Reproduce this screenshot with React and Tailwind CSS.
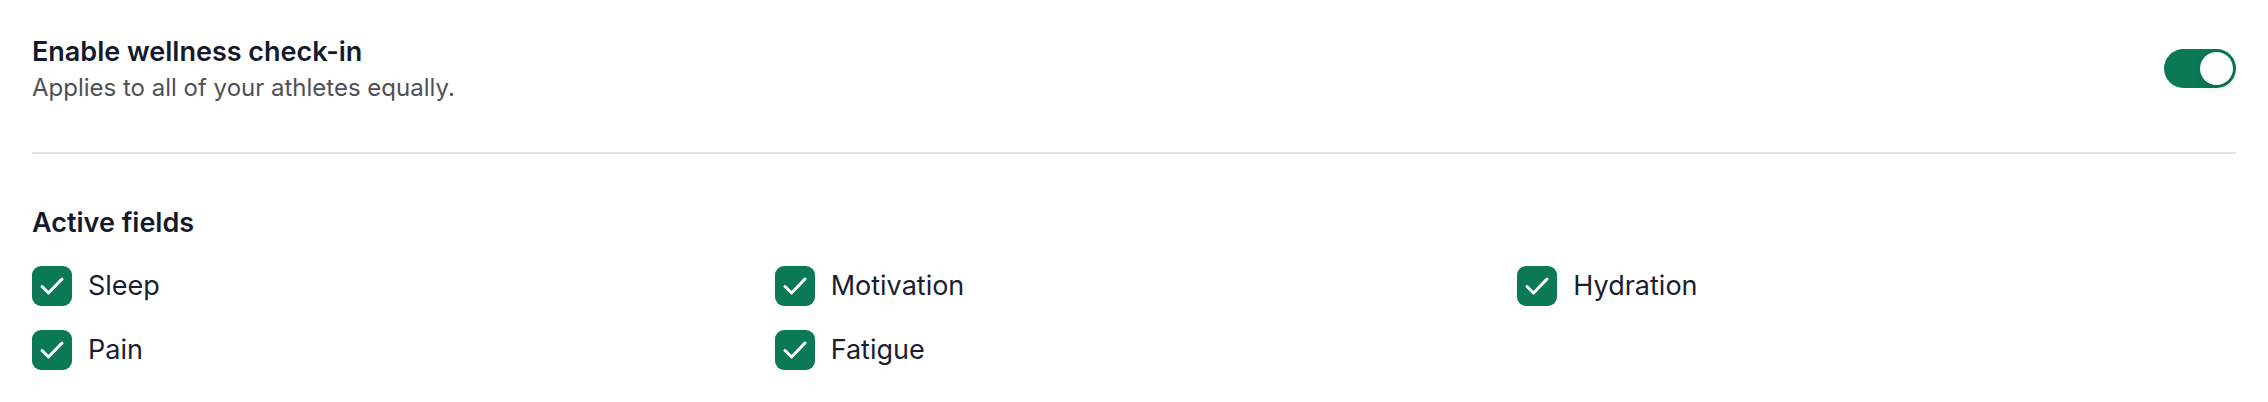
import React, { useState } from 'react'

const fields = ['Sleep', 'Motivation', 'Hydration', 'Pain', 'Fatigue']

function Check() {
  return (
    <svg viewBox="0 0 40 40" className="w-full h-full">
      <path d="M10 20.5 L16.5 27 L30 13" fill="none" stroke="white" strokeWidth="3" strokeLinecap="round" strokeLinejoin="round" />
    </svg>
  )
}

export default function App() {
  const [enabled, setEnabled] = useState(true)
  const [active, setActive] = useState(fields)

  const toggleField = (name) => {
    setActive(active.includes(name) ? active.filter((f) => f !== name) : [...active, name])
  }

  return (
    <div className="bg-white w-[2268px] h-[402px] px-8 pt-8 font-['Inter','Liberation_Sans',sans-serif]">
      <div className="flex items-center justify-between">
        <div className="flex flex-col">
          <h2 className="text-[27px] leading-[40px] font-semibold text-[#141a2e]">Enable wellness check-in</h2>
          <p className="text-[24px] leading-[32px] text-[#4f4f57]">Applies to all of your athletes equally.</p>
        </div>
        <button
          onClick={() => setEnabled(!enabled)}
          className={`w-[72px] h-[39px] rounded-full p-[3px] flex items-center ${enabled ? 'bg-[#0b7856] justify-end' : 'bg-gray-300 justify-start'}`}
        >
          <span className="block w-[33px] h-[33px] rounded-full bg-white shadow-[0_3px_8px_rgba(0,0,0,0.12)]"></span>
        </button>
      </div>

      <div className="mt-12 h-[2px] bg-[#e4e4e4]"></div>

      <h3 className="mt-[49px] text-[27px] leading-[40px] font-semibold text-[#141a2e]">Active fields</h3>

      <div className="mt-[23px] grid grid-cols-3 gap-x-6 gap-y-6">
        {fields.map((name) => (
          <label key={name} className="flex items-center gap-4 cursor-pointer" onClick={() => toggleField(name)}>
            <span className={`w-10 h-10 rounded-[9px] ${active.includes(name) ? 'bg-[#0b7856]' : 'border-2 border-gray-300 bg-white'}`}>
              {active.includes(name) ? <Check /> : null}
            </span>
            <span className="text-[27px] leading-[40px] text-[#1b1d33]">{name}</span>
          </label>
        ))}
      </div>
    </div>
  )
}
